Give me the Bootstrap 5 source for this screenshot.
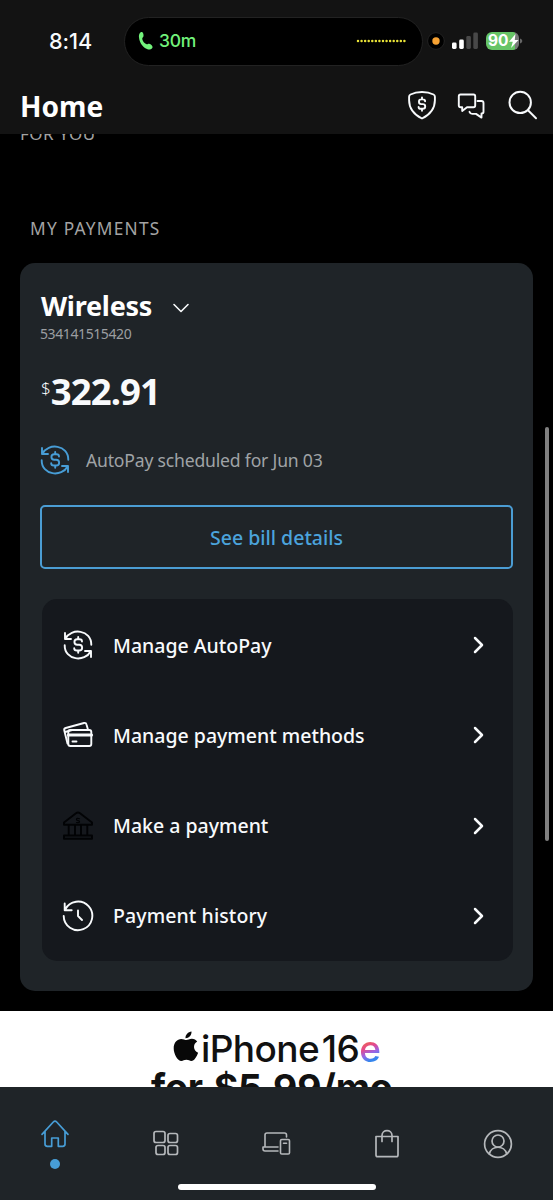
<!DOCTYPE html>
<html lang="en" data-bs-theme="dark">
<head>
<meta charset="utf-8">
<meta name="viewport" content="width=device-width, initial-scale=1">
<title>Home</title>
<link href="https://cdn.jsdelivr.net/npm/bootstrap@5.3.0/dist/css/bootstrap.min.css" rel="stylesheet">
<style>
  body { font-family: "Noto Sans", sans-serif; background: #000; color: #f8fafc; height: 1200px; overflow: hidden; white-space: nowrap; }
  svg { display: block; flex: none; fill: none; stroke: currentColor; stroke-linecap: round; stroke-linejoin: round; }
  .app-head { height: 134px; background: #131313; }
  .status-row { height: 82px; padding-left: 49px; }
  .clock { font: 500 21.7px/26px Inter, sans-serif; width: 75px; letter-spacing: -.1px; }
  .island { width: 299px; height: 49px; background: #000; border: 1.5px solid #222; border-radius: 25px; padding: 0 15px 0 13px; color: #72f27b; }
  .island span { font: 500 17.5px/22px Inter, sans-serif; margin-left: 5px; letter-spacing: -.2px; }
  .batt { width: 33px; height: 18px; border-radius: 6px; background: linear-gradient(90deg, #67c466 29px, #777 29px); }
  .batt b { font: 700 15.5px/18px Inter, sans-serif; color: #fff; }
  .title-row { height: 48px; padding: 0 15px 0 20px; }
  .title-row h1 { font-size: 28.1px; line-height: 38px; font-weight: 700; margin: 0; }
  .title-row svg { margin-top: -2px; }
  .label-caps { color: #a3a3a3; font-size: 17.3px; line-height: 22px; letter-spacing: 1.25px; }
  .for-you { margin: -11px 0 0 20px; font-size: 17px; letter-spacing: .5px; }
  .my-pay { margin: 73px 0 0 30px; }
  .pay-card { margin: 23px 20px 0; height: 728px; border-radius: 15px; background: #1f2428; padding: 25px 20px 0; }
  .pay-card h2 { font-size: 27px; line-height: 36px; font-weight: 700; letter-spacing: -.25px; margin: 0 0 0 1px; }
  .acct { font-size: 14px; line-height: 18px; letter-spacing: -.4px; color: #9b9ea1; margin-top: 1px; }
  .amount { margin-top: 26px; height: 76px; padding-left: 1px; }
  .amount b { font-size: 36.5px; line-height: 44px; letter-spacing: -.9px; }
  .amount small { font-size: 17px; line-height: 24px; margin-top: 7px; font-weight: 300; }
  .auto-line { margin-top: -1px; height: 32px; font-size: 17.6px; letter-spacing: -.2px; color: #9fa3a6; gap: 16px; }
  .text-sky, .tab-bar .text-sky { color: #479dd6; }
  .btn-bill { height: 64px; margin-top: 29px; border: 2px solid #4b9dd4; border-radius: 5px; color: #4ba3dc; font-size: 19.5px; font-weight: 500; }
  .btn-bill span { margin-top: 2px; }
  .pay-menu { margin: 30px 0 0 2px; height: 362px; border-radius: 15px; background: #15181d; padding-top: 1px; }
  .pay-menu a { height: 90.3px; padding: 0 28px 0 20px; color: #f8fafc; font-size: 19.5px; font-weight: 500; text-decoration: none; }
  .pay-menu a > span { margin-left: 19px; }
  .promo { margin-top: 20px; height: 76px; background: #fff; color: #111; overflow: hidden; font-family: Inter, sans-serif; }
  .promo-name { height: 56px; padding: 16px 0 0 173px; font-size: 37px; line-height: 44px; font-weight: 500; letter-spacing: -.6px; }
  .promo-name i { font-style: normal; color: transparent; background: linear-gradient(155deg, #f06a37 30%, #e34890 50%, #9866e6 64%, #3686ed 78%); -webkit-background-clip: text; background-clip: text; }
  .promo-price { padding-left: 151px; font-size: 37.5px; line-height: 44px; font-weight: 700; margin-top: -1px; letter-spacing: -.15px; word-spacing: 2px; }
  .scroll-thumb { position: absolute; left: 545px; top: 427px; width: 4px; height: 414px; border-radius: 2px; background: #808080; }
  .tab-bar { height: 113px; background: #1f2428; color: #b5b8bb; position: relative; }
  .tab-bar a { width: 20%; color: inherit; }
  .home-line { position: absolute; left: 178px; bottom: 10px; width: 198px; height: 6px; border-radius: 3px; background: #fff; }
</style>
</head>
<body class="d-flex flex-column">
<header class="app-head flex-shrink-0">
  <div class="status-row d-flex align-items-center">
    <span class="clock">8:14</span>
    <div class="island d-flex align-items-center">
      <svg width="16" height="20" viewBox="0 0 16 20"><path fill="currentColor" stroke="none" d="M3.8.9C5.300 1 6 4.300 5.300 5.700 4.900 6.500 4 6.900 4.300 8.200c.6 2.400 2.400 4.400 4.400 5 1 .3 1.500-.8 2.500-.5 1.700.5 3.900 2.500 3.300 3.700-.7 1.600-2.500 2.400-4.400 2C5.700 17.500 1.600 12.600 1 6.600.700 3.600 1.700.9 3.800.9z"/></svg>
      <span>30m</span>
      <svg class="ms-auto" width="51" height="6" viewBox="0 0 51 6"><path stroke="#e9e337" stroke-width="2.500" stroke-dasharray="0 3.570" d="M2 3h48"/></svg>
    </div>
    <svg class="ms-1" width="18" height="18" viewBox="0 0 18 18"><circle cx="9" cy="9" r="8.400" fill="#000" stroke="#222"/><circle cx="9" cy="9" r="3.700" fill="#f7a233" stroke="none"/></svg>
    <svg style="margin-left:7px" width="27" height="18" viewBox="0 0 27 18"><g fill="#fff" stroke="none"><rect x="0" y="10.500" width="4.600" height="6.500" rx="1.400"/><rect x="7.200" y="7.500" width="4.600" height="9.500" rx="1.400"/></g><g fill="#484848" stroke="none"><rect x="14.300" y="4" width="4.600" height="13" rx="1.400"/><rect x="21.300" y=".5" width="4.600" height="16.500" rx="1.400"/></g></svg>
    <div class="batt d-flex align-items-center" style="margin-left:7px;padding-left:2px"><b>90</b><svg width="10" height="14" viewBox="0 0 10 14"><path d="M6.500 0 0 7.700h3.800L2 14l7.500-8H5.700z" fill="#fff" stroke="none"/></svg></div>
    <svg width="4" height="8" viewBox="0 0 4 8"><path d="M1 1.500c3 1 3 4 0 5z" fill="#666" stroke="none"/></svg>
  </div>
  <div class="title-row d-flex align-items-center">
    <h1 class="me-auto">Home</h1>
    <svg width="30" height="30" viewBox="0 0 30 30" stroke-width="1.900"><path d="M15 2c4.500 0 8.200.8 11.500 2.500 1 .5 1.400 1.200 1.400 2.300v3.400C27.900 18 23 24.500 15 28.500 7 24.500 2.100 18 2.100 10.200V6.800c0-1.100.4-1.800 1.400-2.300C6.800 2.800 10.500 2 15 2z"/><path d="M18.100 11.300c0-1.200-1-1.900-2.300-1.900h-1.600c-3 0-3 4.700 0 4.700h1.600c3.200 0 3.200 4.700 0 4.700H14c-1.400 0-2.400-.7-2.400-1.900M15 7.500v1.900m0 9.400v1.900"/></svg>
    <svg style="margin-left:19px" width="30" height="30" viewBox="0 0 30 30" stroke-width="1.900" stroke-linejoin="miter"><path d="M4.500 4.500h13q1.700 0 1.700 1.700v9.300q0 1.700-1.700 1.700H11l-4.800 3.700v-3.700H4.500q-1.700 0-1.700-1.700V6.200q0-1.700 1.700-1.700zM21.500 11h4q2 0 2 2v8.700q0 1.700-1.700 1.700h-.3v4.200L20 23.900h-3.800q-1.800 0-2.700-2.100"/></svg>
    <svg style="margin-left:22px" width="30" height="30" viewBox="0 0 30 30" stroke-width="2"><circle cx="12.200" cy="12.400" r="10.700"/><path d="m20 20.300 8 8"/></svg>
  </div>
</header>
<main class="flex-grow-1 overflow-hidden" style="min-height:0">
  <div class="label-caps for-you">FOR YOU</div>
  <div class="label-caps my-pay">MY PAYMENTS</div>
  <section class="pay-card">
    <div class="d-flex align-items-center"><h2>Wireless</h2><svg style="margin-left:20px;margin-top:4px" width="18" height="12" viewBox="0 0 18 12" stroke-width="1.600"><path d="m2 2.500 7 7 7-7"/></svg></div>
    <div class="acct">534141515420</div>
    <div class="amount d-flex"><small>$</small><b>322.91</b></div>
    <div class="auto-line d-flex align-items-center">
      <svg class="text-sky" width="30" height="30" viewBox="0 0 30 30" stroke-width="1.900" stroke-linejoin="miter"><g id="cycle"><path d="M2 3v6h6M2.300 8.700C8-2.500 28.500-.5 28.300 14.800M28 27v-6h-6M27.700 21.300C22 32.500 1.500 30.500 1.700 15.200"/><path d="M19 11.500c0-1.400-1-2.200-2.500-2.200h-2.300c-3.700 0-3.700 5.500 0 5.500h2c3.900 0 3.900 5.700 0 5.700h-2.400c-1.500 0-2.600-.9-2.600-2.300M15.200 7v2.300m0 11.200v2.300"/></g></svg>
      <span>AutoPay scheduled for Jun 03</span>
    </div>
    <button class="btn btn-bill w-100 d-flex align-items-center justify-content-center p-0"><span>See bill details</span></button>
    <nav class="pay-menu">
      <a href="#" class="d-flex align-items-center"><svg width="32" height="32" viewBox="-1 -1 32 32" stroke-width="1.900" stroke-linejoin="miter"><use href="#cycle"/></svg><span>Manage AutoPay</span><svg class="ms-auto" width="13" height="20" viewBox="0 0 13 20" stroke-width="2.500"><path d="m3 3 7 7-7 7"/></svg></a>
      <a href="#" class="d-flex align-items-center"><svg width="32" height="32" viewBox="0 0 32 32" stroke-width="1.900"><rect x="6.300" y="11" width="23" height="16" rx="2"/><path d="M6.500 16h23" stroke-width="3.200"/><path d="M10.500 22.500h4M5.500 24.500 2.300 11.500Q1.800 9.500 3.700 9L22 4q2-.5 2.500 1.500l1.300 4.500M3.200 13 10 11"/></svg><span>Manage payment methods</span><svg class="ms-auto" width="13" height="20" viewBox="0 0 13 20" stroke-width="2.500"><path d="m3 3 7 7-7 7"/></svg></a>
      <a href="#" class="d-flex align-items-center"><svg style="color:#020305" width="32" height="32" viewBox="0 0 32 32" stroke-width="1.900"><path d="M2 12.500v2.300h28v-2.300L18 3.300q-2-1.500-4 0zM2 25.500h28v3.300H2zM6.700 15v10M13 15v10M19 15v10M25.300 15v10"/><path stroke-width="1.200" d="M17.500 8.700q-3-1-3 .8 0 1 1.500 1.100 1.700.2 1.500 1.400-.4 1-3 .5"/></svg><span>Make a payment</span><svg class="ms-auto" width="13" height="20" viewBox="0 0 13 20" stroke-width="2.500"><path d="m3 3 7 7-7 7"/></svg></a>
      <a href="#" class="d-flex align-items-center"><svg width="32" height="32" viewBox="0 0 32 32" stroke-width="1.900" stroke-linejoin="miter"><path d="M2.700 3.500v6.700h7M3.200 9.500A14.300 14.300 0 1 1 1.700 16M16 10.500V16l4 4"/></svg><span style="letter-spacing:.1px">Payment history</span><svg class="ms-auto" width="13" height="20" viewBox="0 0 13 20" stroke-width="2.500"><path d="m3 3 7 7-7 7"/></svg></a>
    </nav>
  </section>
  <section class="promo">
    <div class="promo-name d-flex"><svg width="26" height="32" viewBox="0 0 26 32" style="margin:4px 2px 0 0"><path fill="#080808" stroke="none" d="M18.500.5c.3 3.500-2.500 6.700-6 6.700C12.200 3.800 15.300.8 18.500.5zM13.300 9c1.600 0 3-1.300 5.600-1.300 2.200 0 4.200 1.200 5.300 2.900-4.700 2.700-4 9.200.9 11.200-1.400 4-3.900 8.200-6.700 8.200-2 0-2.500-1.200-5-1.200S10.300 30 8.400 30C4.500 30 .7 22.800.7 17.200c0-5.700 3.600-9.300 7.500-9.300 2.200 0 3.900 1.100 5.100 1.100z"/></svg>iPhone&hairsp;16<i>e</i></div>
    <div class="promo-price">for $5.99/mo</div>
  </section>
</main>
<footer class="tab-bar d-flex flex-shrink-0">
  <a href="#" class="text-sky d-flex flex-column align-items-center" style="padding-top:32px"><svg width="30" height="30" viewBox="0 0 30 30" stroke-width="1.700"><path d="M2 15.300 13.300 3q1.700-1.600 3.400 0L28 15.300M5 12.500V25q0 2.300 2.300 2.300h4.400v-8.300h6.600v8.300h4.400Q25 27.300 25 25V12.500"/></svg><svg style="margin-top:10px" width="10" height="10" viewBox="0 0 10 10"><circle cx="5" cy="5" r="5" fill="currentColor" stroke="none"/></svg></a>
  <a href="#" class="d-flex justify-content-center" style="padding-top:42px"><svg width="28" height="28" viewBox="0 0 28 28" stroke-width="1.700"><rect x="2" y="2.500" width="11" height="11" rx="2"/><rect x="16" y="4.500" width="9.500" height="9" rx="2"/><rect x="4" y="16.500" width="9" height="9" rx="2"/><rect x="16" y="16.500" width="9.500" height="9" rx="2"/></svg></a>
  <a href="#" class="d-flex justify-content-center" style="padding-top:42px"><svg width="30" height="28" viewBox="0 0 30 28" stroke-width="1.600" stroke-linecap="butt"><path d="M4 18V6q0-2 2-2h17.500q2 0 2 2v2M17 18H2v2q0 2 2 2h13"/><rect x="19.500" y="10.500" width="9" height="14.500" rx="1.300"/><path d="M22.500 14.200h3"/></svg></a>
  <a href="#" class="d-flex justify-content-center" style="padding-top:42px"><svg width="28" height="30" viewBox="0 0 28 30" stroke-width="1.700"><path d="M3 7.500h22V26q0 1.700-1.700 1.700H4.700Q3 27.700 3 26zM9 12.500V6.500c0-6.500 10-6.500 10 0v6"/></svg></a>
  <a href="#" class="d-flex justify-content-center" style="padding-top:42px"><svg width="30" height="30" viewBox="0 0 30 30" stroke-width="1.700"><circle cx="15" cy="15" r="13.400"/><circle cx="15" cy="12" r="6"/><path d="M6.300 25c2-9 15.400-9 17.400 0"/></svg></a>
  <div class="home-line"></div>
</footer>
<div class="scroll-thumb"></div>
<script src="https://cdn.jsdelivr.net/npm/bootstrap@5.3.0/dist/js/bootstrap.bundle.min.js"></script>
</body>
</html>
